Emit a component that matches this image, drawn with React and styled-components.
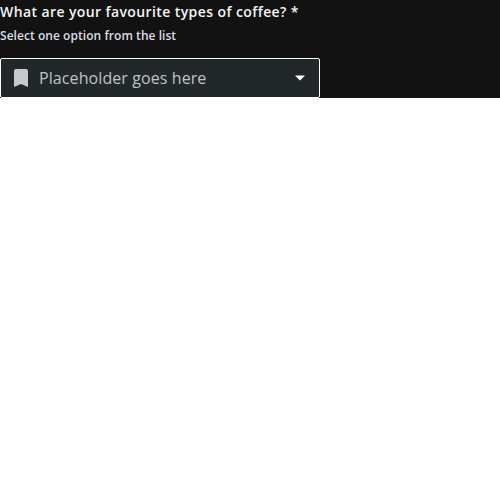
import React from "react";
import styled, { createGlobalStyle } from "styled-components";

const GlobalStyle = createGlobalStyle`
  body { margin: 0; background: #fff; }
  * { box-sizing: border-box; }
`;

const Field = styled.div`
  display: flex;
  flex-direction: column;
  align-items: flex-start;
  height: 98px;
  background: #121212;
  color: #fff;
  font-family: "Open Sans", sans-serif;
`;

const Label = styled.label`
  font-size: 14px;
  font-weight: 600;
  line-height: 24px;
  letter-spacing: 0.4px;
  color: #f4f4f5;
`;

const HelperText = styled.span`
  margin-bottom: 11px;
  font-size: 12px;
  font-weight: 600;
  line-height: 23px;
  letter-spacing: 0.05px;
  color: #dcdde0;
`;

const SelectButton = styled.button`
  display: flex;
  align-items: center;
  width: 320px;
  height: 40px;
  padding: 0 12px;
  border: 1px solid #fff;
  border-radius: 2px;
  background: #22272a;
  font-family: inherit;
`;

const BookmarkIcon = styled.svg`
  width: 16px;
  height: 20px;
  fill: #c7c9cf;
`;

const Placeholder = styled.span`
  flex: 1;
  margin-left: 10px;
  text-align: left;
  font-size: 16px;
  line-height: 24px;
  letter-spacing: 0.09px;
  color: #c0c2c8;
`;

const Caret = styled.svg`
  width: 14px;
  height: 8px;
  fill: #fff;
`;

export default function App() {
  return (
    <>
      <GlobalStyle />
      <Field>
        <Label htmlFor="coffee">What are your favourite types of coffee? *</Label>
        <HelperText>Select one option from the list</HelperText>
        <SelectButton id="coffee" type="button">
          <BookmarkIcon viewBox="0 0 16 20">
            <path d="M3 1h10a2 2 0 0 1 2 2v16l-7-3-7 3V3a2 2 0 0 1 2-2z" />
          </BookmarkIcon>
          <Placeholder>Placeholder goes here</Placeholder>
          <Caret viewBox="0 0 14 8">
            <path d="M2 1.5h10L7 6.5z" />
          </Caret>
        </SelectButton>
      </Field>
    </>
  );
}
